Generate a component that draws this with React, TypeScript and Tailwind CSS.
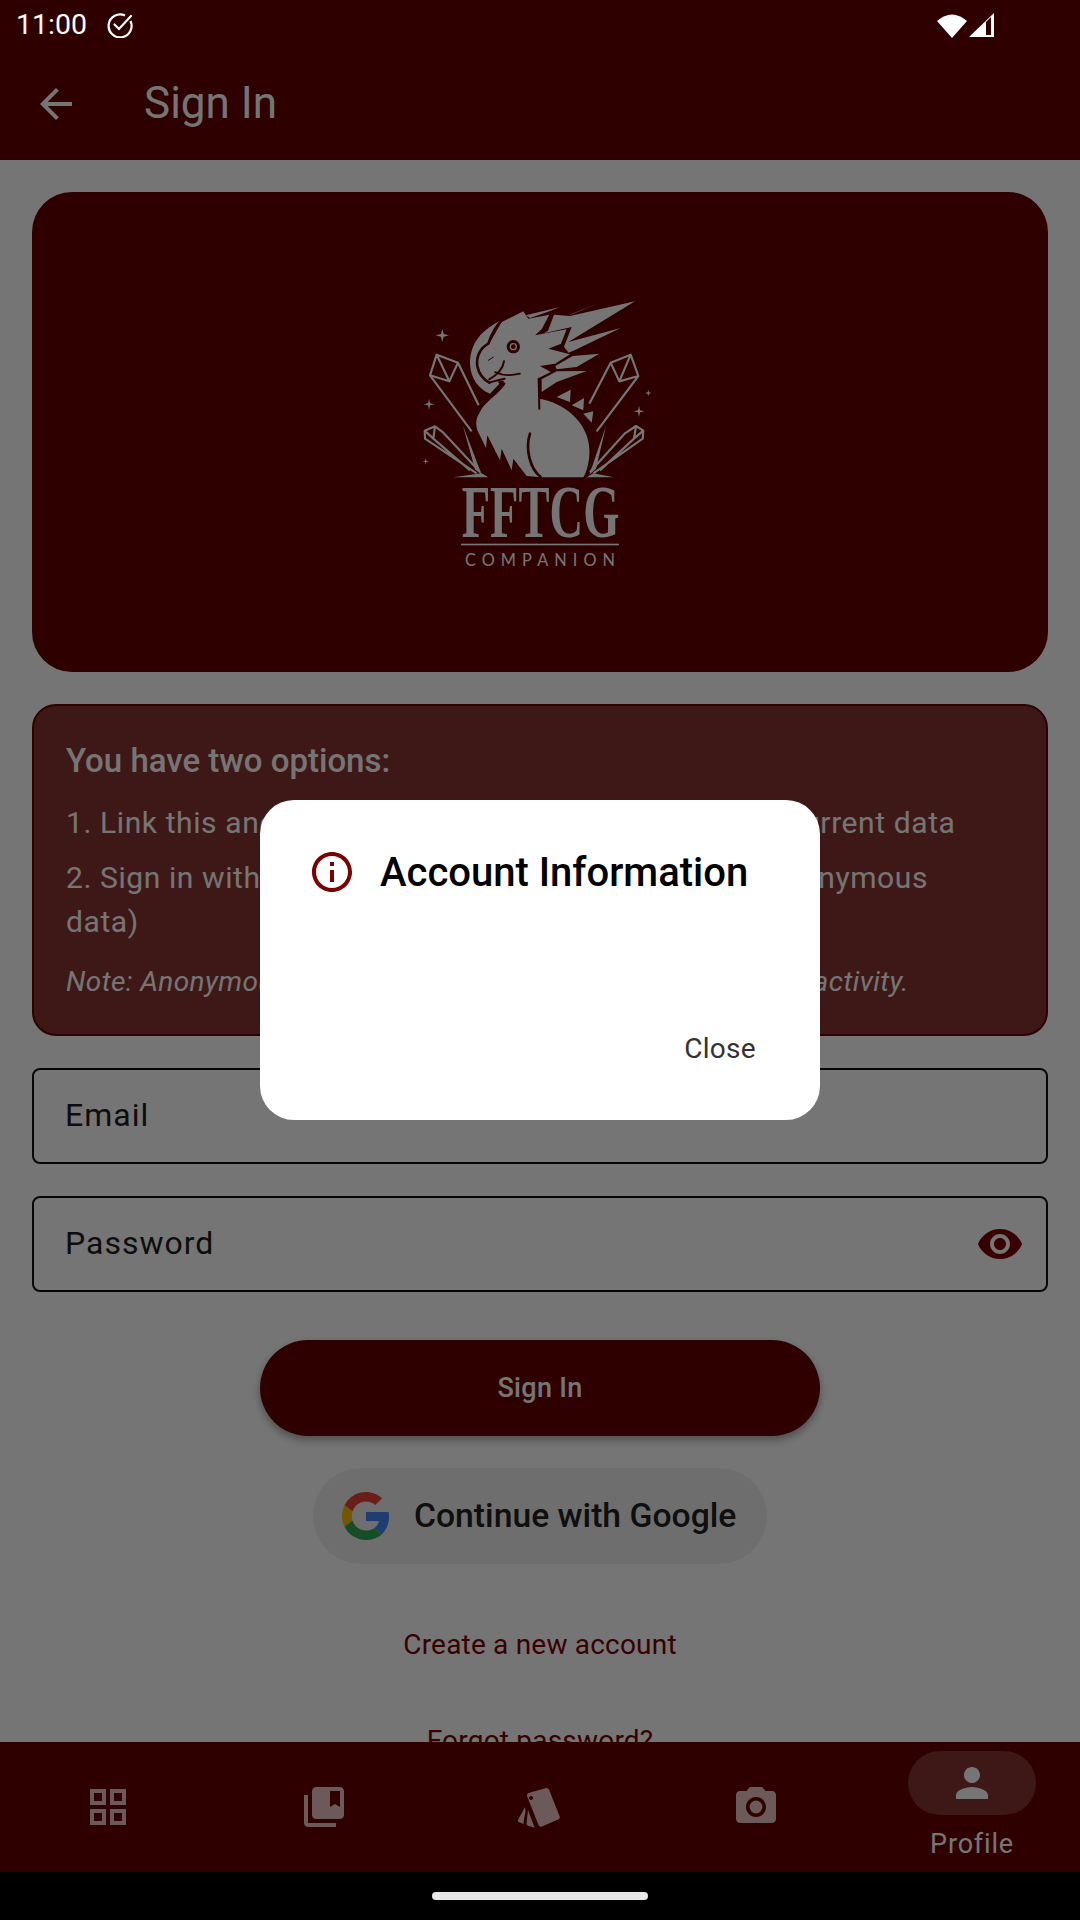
const FONT = "font-['Roboto',sans-serif]";

const FftcgLogo = () => (
  <svg viewBox="0 0 960 960" className="w-[320px] h-[320px]">
    {/* crystals */}
    <g fill="none" stroke="#fff" strokeWidth="6.5" strokeLinejoin="round">
      <path d="M296 400 L234 272 L170 248 L150 310 L208 328 L234 272 M170 248 L208 328 M150 310 L275 478" />
      <path d="M628 395 L692 272 L752 248 L775 312 L718 328 L692 272 M752 248 L718 328 M775 312 L650 478" />
      <path d="M290 604 L135 500 L134 476 L165 463 L190 482 L300 600 M165 463 L160 500 L134 476 M160 500 L270 595" />
      <path d="M640 604 L788 500 L790 476 L768 462 L735 484 L630 600 M768 462 L762 500 L790 476 M762 500 L660 595" />
    </g>
    {/* sparkles */}
    <g fill="#fff">
      <path d="M187 170 L191 186 L207 190 L191 194 L187 210 L183 194 L167 190 L183 186Z" />
      <path d="M147 380 L150 394 L164 397 L150 400 L147 414 L144 400 L130 397 L144 394Z" />
      <path d="M137 558 L139 566 L147 568 L139 570 L137 578 L135 570 L127 568 L135 566Z" />
      <path d="M805 353 L807 361 L815 363 L807 365 L805 373 L803 365 L795 363 L803 361Z" />
      <path d="M777 401 L780 415 L794 418 L780 421 L777 435 L774 421 L760 418 L774 415Z" />
    </g>
    {/* feathers */}
    <g fill="#fff">
      <path d="M438 130 L540 105 L502 120 L450 138Z" />
      <path d="M565 130 L665 90 L580 125Z" />
      <path d="M522 128 L570 132 L765 88 L565 210 L722 168 L590 232 L566 242 L552 224 L575 165 L492 184 L504 176Z" />
      <path d="M578 252 L658 245 L590 285 L530 292 L526 282Z" />
      <path d="M485 322 L530 298 L620 297 L530 330 L485 360Z" />
      <path d="M530 375 L572 353 L570 390Z" />
      <path d="M575 400 L612 378 L610 415Z" />
      <path d="M610 425 L640 418 L635 452Z" />
      <path d="M248 458 L305 608 L285 592Z" />
      <path d="M678 462 L628 608 L648 590Z" />
      <path d="M220 616 L305 604 L325 616Z" />
      <path d="M702 616 L640 604 L620 616Z" />
    </g>
    {/* crest */}
    <path d="M365 145 C310 170 270 210 270 275 C272 320 295 350 330 365 L358 335 L300 250Z" fill="#fff" />
    {/* beak */}
    <path d="M325 215 C295 230 288 260 292 282 C296 305 310 322 328 332 L378 325 L385 260Z" fill="#fff" />
    {/* head and body */}
    <path
      d="M430 118 L445 140 L508 128 L485 172 L465 190 L560 172 L543 215 L505 230 L570 247 L525 275 L480 282 L512 300 L476 318 L476 380
      C550 390 625 450 628 530 C630 565 620 600 610 616 L482 616 L440 612 L400 560 L395 595 L365 530 L360 565 L322 490 L318 528 L292 475
      C285 450 290 435 300 420 C320 380 365 360 372 330 L355 290 L325 220 L365 150Z"
      fill="#fff"
    />
    {/* dark detail lines */}
    <g fill="none" stroke="#640000" strokeLinecap="round" strokeLinejoin="round">
      <path d="M365 145 C340 170 332 195 325 215 C300 228 288 255 292 282 C296 305 310 322 328 332" strokeWidth="8" />
      <path d="M328 332 C345 326 360 324 374 320" strokeWidth="6" />
      <path d="M328 322 C345 312 368 295 372 268" strokeWidth="6" />
      <path d="M345 300 C370 312 400 310 420 305" strokeWidth="5" />
      <path d="M325 265 L340 255" strokeWidth="3" />
      <path d="M372 335 C355 360 330 375 312 395" strokeWidth="8" />
      <path d="M476 320 L478 410" strokeWidth="6" />
      <path d="M450 485 C435 530 450 590 482 615" strokeWidth="8" />
    </g>
    <circle cx="400" cy="224" r="20" fill="#640000" />
    <circle cx="400" cy="224" r="11" fill="#fff" />
    <circle cx="400" cy="224" r="7" fill="#640000" />
    {/* wordmark */}
    <text x="245" y="795" textLength="473" lengthAdjust="spacingAndGlyphs" fill="#fff" fontFamily="'Liberation Serif', serif" fontWeight="700" fontSize="222">FFTCG</text>
    <rect x="243" y="815" width="474" height="5" fill="#fff" />
    <text x="255" y="882" textLength="450" fill="#fff" fontFamily="Lato, sans-serif" fontSize="49">COMPANION</text>
  </svg>
);

const GoogleLogo = () => (
  <svg viewBox="0 0 48 48" className="w-12 h-12">
    <path fill="#EA4335" d="M24 9.5c3.54 0 6.71 1.22 9.21 3.6l6.85-6.85C35.9 2.38 30.47 0 24 0 14.62 0 6.51 5.38 2.56 13.22l7.98 6.19C12.43 13.72 17.74 9.5 24 9.5z" />
    <path fill="#4285F4" d="M46.98 24.55c0-1.57-.15-3.09-.38-4.55H24v9.02h12.94c-.58 2.96-2.26 5.48-4.78 7.18l7.73 6c4.51-4.18 7.09-10.36 7.09-17.65z" />
    <path fill="#FBBC05" d="M10.53 28.59c-.48-1.45-.76-2.99-.76-4.59s.27-3.14.76-4.59l-7.98-6.19C.92 16.46 0 20.12 0 24c0 3.88.92 7.54 2.56 10.78l7.97-6.19z" />
    <path fill="#34A853" d="M24 48c6.48 0 11.93-2.13 15.89-5.81l-7.73-6c-2.15 1.45-4.92 2.3-8.16 2.3-6.26 0-11.57-4.22-13.47-9.91l-7.98 6.19C6.51 42.62 14.62 48 24 48z" />
  </svg>
);

const NavIcon = ({ children }: { children: React.ReactNode }) => (
  <div className="flex items-center justify-center">
    <svg viewBox="0 0 24 24" className="w-12 h-12 fill-[#ebc4c4]">{children}</svg>
  </div>
);

const TextField = ({ label, trailing }: { label: string; trailing?: React.ReactNode }) => (
  <div className="h-[96px] rounded-[8px] border-2 border-[#111] flex items-center justify-between pl-[31px] pr-[22px] text-[32px] tracking-[1px] text-[#1d1d1d]">
    <span className="-mt-[2px]">{label}</span>
    {trailing}
  </div>
);

export default function App() {
  return (
    <div className={`relative w-[1080px] h-[1920px] flex flex-col overflow-hidden bg-white ${FONT}`}>
      <header className="h-[160px] shrink-0 bg-[#640000] text-white">
        <div className="h-[64px]" />
        <div className="h-[96px] flex items-center pl-[32px] gap-[64px] pb-[16px]">
          <svg viewBox="0 0 24 24" className="w-12 h-12 fill-white">
            <path d="M20 11H7.830l5.590-5.590L12 4l-8 8 8 8 1.410-1.410L7.830 13H20v-2z" />
          </svg>
          <span className="text-[44px] leading-none -mt-[2px]">Sign In</span>
        </div>
      </header>

      <main className="flex-1 min-h-0 overflow-hidden px-[32px] pt-[32px] flex flex-col">
        <div className="h-[480px] shrink-0 rounded-[40px] bg-[#640000] flex items-center justify-center">
          <FftcgLogo />
        </div>

        <div className="mt-[32px] h-[332px] shrink-0 rounded-[24px] border-2 border-[#640000] bg-[#873434] text-white px-[32px] pt-[35px]">
          <p className="text-[33px] font-medium leading-[40px]">You have two options:</p>
          <p className="mt-[20px] text-[30px] tracking-[0.6px] leading-[44px]">1. Link this anonymous account to an email to keep current data</p>
          <p className="mt-[11px] text-[30px] tracking-[0.6px] leading-[44px]">
            2. Sign in with an existing account (this will delete anonymous
            <br />
            data)
          </p>
          <p className="mt-[18px] text-[28px] italic tracking-[0.4px] leading-[40px]">Note: Anonymous accounts will be deleted after 7 days of inactivity.</p>
        </div>

        <div className="mt-[32px] flex flex-col gap-[32px] shrink-0">
          <TextField label="Email" />
          <TextField
            label="Password"
            trailing={
              <svg viewBox="0 0 24 24" className="w-12 h-12 fill-[#7b0000]">
                <path d="M12 4.5C7 4.5 2.73 7.61 1 12c1.73 4.39 6 7.5 11 7.5s9.27-3.11 11-7.5c-1.73-4.39-6-7.5-11-7.5zM12 17c-2.76 0-5-2.24-5-5s2.24-5 5-5 5 2.24 5 5-2.24 5-5 5zm0-8c-1.66 0-3 1.34-3 3s1.34 3 3 3 3-1.34 3-3-1.34-3-3-3z" />
              </svg>
            }
          />
        </div>

        <div className="mt-[48px] flex flex-col items-center shrink-0">
          <button className="w-[560px] h-[96px] rounded-full bg-[#640000] text-white text-[27px] font-medium tracking-[0.3px] pt-[1px] shadow-[0_4px_8px_rgba(0,0,0,0.35)]">
            Sign In
          </button>
          <button className="mt-[32px] w-[454px] h-[96px] rounded-full bg-[#f0f0f0] flex items-center pl-[29px] gap-[24px] text-[33.7px] font-medium text-[#222]">
            <GoogleLogo />
            <span className="pt-[1px]">Continue with Google</span>
          </button>
          <a className="mt-[63px] text-[28px] tracking-[0.2px] leading-[36px] text-[#7b0000]">Create a new account</a>
          <a className="mt-[60px] text-[28px] tracking-[0.2px] leading-[36px] text-[#7b0000]">Forgot password?</a>
        </div>
      </main>

      <nav className="h-[130px] shrink-0 bg-[#640000] grid grid-cols-5 items-center relative">
        <NavIcon>
          <path d="M3 3v8h8V3H3zm6 6H5V5h4v4zm-6 4v8h8v-8H3zm6 6H5v-4h4v4zm4-16v8h8V3h-8zm6 6h-4V5h4v4zm-6 4v8h8v-8h-8zm6 6h-4v-4h4v4z" />
        </NavIcon>
        <NavIcon>
          <path d="M4 6H2v14c0 1.1.9 2 2 2h14v-2H4V6z" />
          <path d="M20 2H8c-1.1 0-2 .9-2 2v12c0 1.1.9 2 2 2h12c1.1 0 2-.9 2-2V4c0-1.1-.9-2-2-2zm0 10l-2.5-1.5L15 12V4h5v8z" />
        </NavIcon>
        <div className="flex items-center justify-center">
          <svg viewBox="0 0 48 48" className="w-12 h-12 fill-[#ebc4c4]">
            <path fillRule="evenodd" d="M12.5 10 L30 5 Q32 4.5 33 6.500 L43.500 33 Q44.500 35.500 42 36.500 L26 43.500 Q23.500 44.500 22.500 42 L11 13 Q10.500 10.800 12.500 10 Z M15 13 a2 2 0 1 0 0.100 0 Z" />
            <path d="M9 24 L2 37 Q1.500 39.500 4 39.500 L7.500 41 Q8 34 9.500 29 Z" />
            <path d="M12 27 L10.500 41 Q11 43 13 43 L18.500 44.500 Z" />
          </svg>
        </div>
        <NavIcon>
          <circle cx="12" cy="12" r="3.2" />
          <path d="M9 2L7.170 4H4c-1.100 0-2 .9-2 2v12c0 1.100.9 2 2 2h16c1.100 0 2-.9 2-2V6c0-1.100-.9-2-2-2h-3.170L15 2H9zm3 15c-2.760 0-5-2.240-5-5s2.240-5 5-5 5 2.240 5 5-2.240 5-5 5z" />
        </NavIcon>
        <div className="flex flex-col items-center pt-[9px] self-start">
          <div className="w-[128px] h-[64px] rounded-full bg-[#873434] flex items-center justify-center">
            <svg viewBox="0 0 24 24" className="w-12 h-12 fill-white">
              <path d="M12 12c2.210 0 4-1.790 4-4s-1.790-4-4-4-4 1.790-4 4 1.790 4 4 4zm0 2c-2.670 0-8 1.340-8 4v2h16v-2c0-2.660-5.330-4-8-4z" />
            </svg>
          </div>
          <span className="mt-[11px] text-[27px] leading-[36px] tracking-[0.8px] text-white">Profile</span>
        </div>
      </nav>

      <div className="h-[48px] shrink-0 bg-black" />

      {/* scrim behind the dialog */}
      <div className="absolute inset-0 bg-black/54" />

      {/* status bar stays bright above the scrim */}
      <div className="absolute top-0 left-0 right-0 h-[50px] flex items-center justify-between pl-[16px] pr-[86px] text-white">
        <div className="flex items-center gap-[20px]">
          <span className="text-[28.5px] leading-none">11:00</span>
          <svg viewBox="0 0 26 26" className="w-[26px] h-[26px]" fill="none" stroke="#fff" strokeWidth="2.200">
            <path d="M18 3.500 A11.500 11.500 0 1 0 23.500 9" />
            <path d="M7.500 12.500 L12 17 L24 4" strokeLinecap="round" />
          </svg>
        </div>
        <div className="flex items-center gap-[3px]">
          <svg viewBox="0 0 30 25" className="w-[30px] h-[25px] fill-white">
            <path d="M0 8 Q15 -5 30 8 L15 25Z" />
          </svg>
          <svg viewBox="0 0 25 24" className="w-[25px] h-[24px] -ml-[1px]">
            <path d="M0 24 L25 0 V24Z" fill="#fff" />
            <path d="M17 9 L22 4 V22 H17Z" fill="#2e0000" />
          </svg>
        </div>
      </div>

      {/* gesture pill */}
      <div className="absolute bottom-[20px] left-[432px] w-[216px] h-[8px] rounded-full bg-[#e8e8e8]" />

      <div className="absolute top-[800px] left-[260px] w-[560px] h-[320px] rounded-[34px] bg-white">
        <div className="absolute top-[48px] left-[48px] flex items-center gap-[24px]">
          <svg viewBox="0 0 24 24" className="w-12 h-12 fill-[#7b0000]">
            <path d="M11 7h2v2h-2zm0 4h2v6h-2zm1-9C6.480 2 2 6.480 2 12s4.480 10 10 10 10-4.480 10-10S17.520 2 12 2zm0 18c-4.410 0-8-3.590-8-8s3.590-8 8-8 8 3.590 8 8-3.590 8-8 8z" />
          </svg>
          <span className="text-[40px] font-medium leading-none text-black pt-[2px]">Account Information</span>
        </div>
        <button className="absolute top-[231px] right-[64px] text-[28px] leading-[36px] tracking-[0.3px] text-[#333]">Close</button>
      </div>
    </div>
  );
}
